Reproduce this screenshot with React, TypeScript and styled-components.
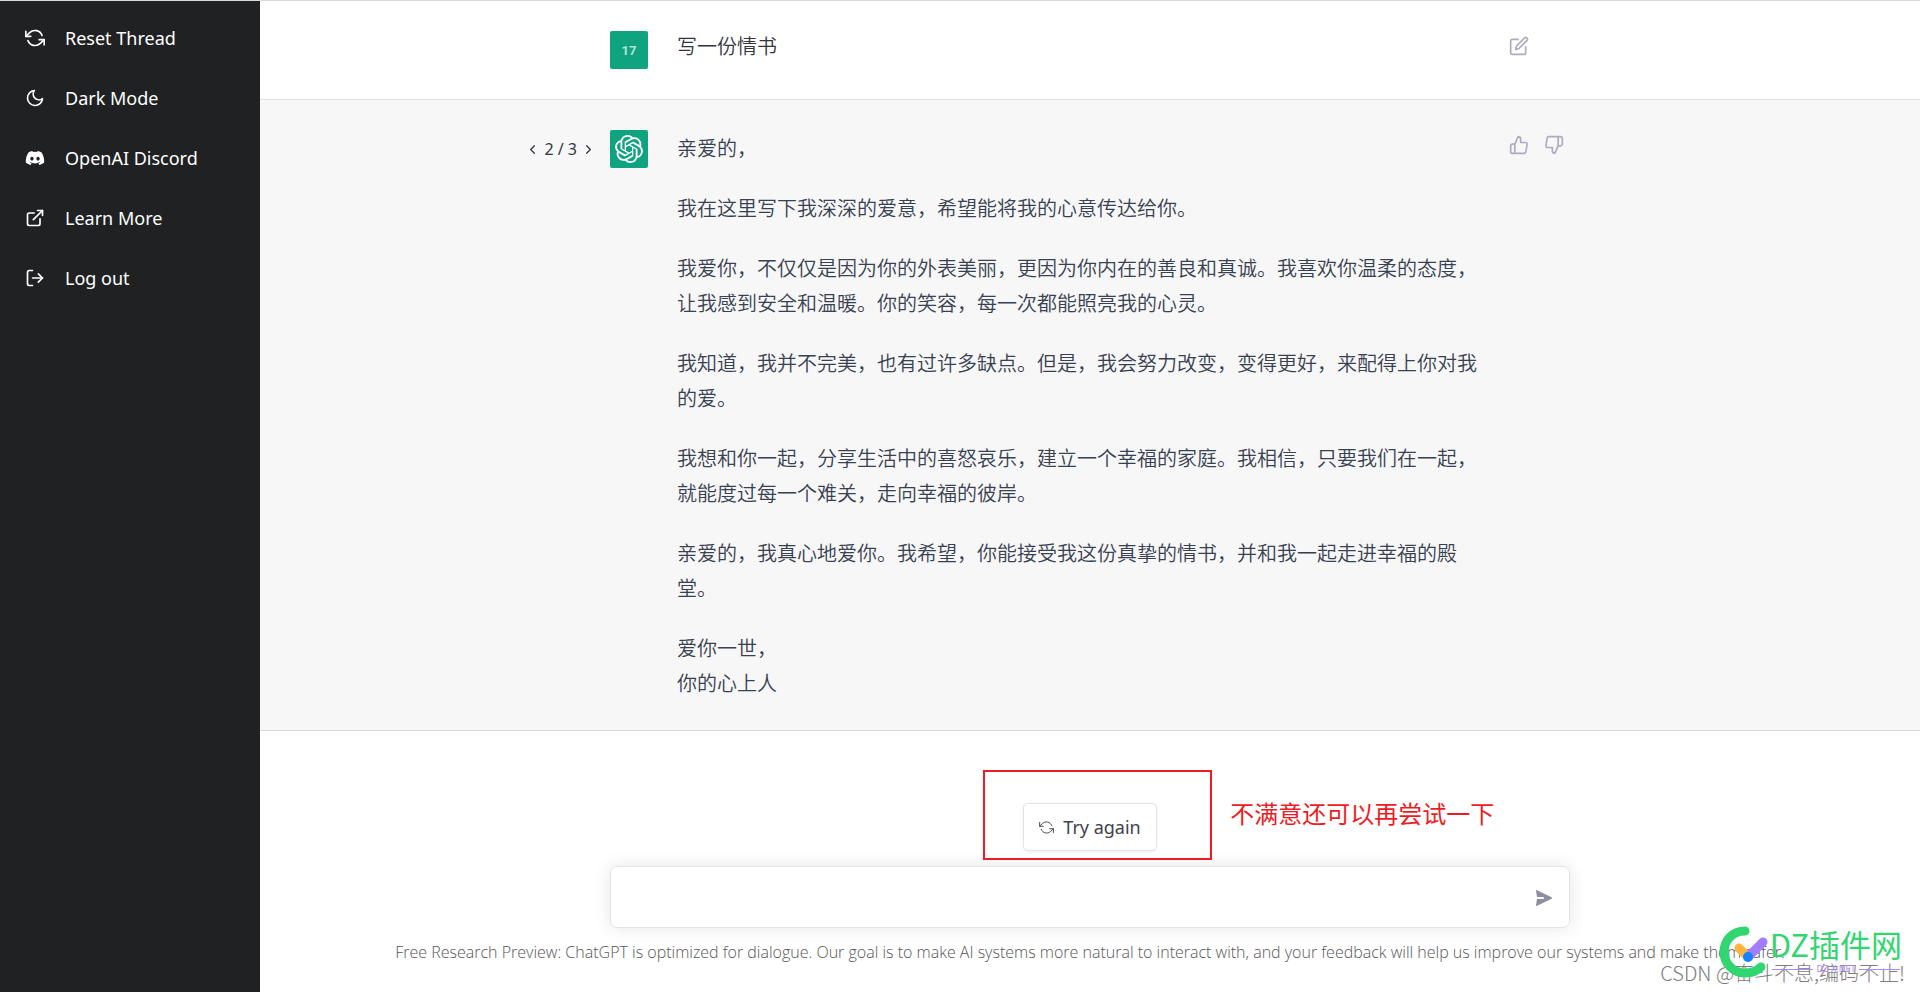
import React from "react";
import styled, { createGlobalStyle } from "styled-components";
import { FiRefreshCcw, FiMoon, FiExternalLink, FiLogOut, FiEdit, FiThumbsUp, FiThumbsDown, FiChevronLeft, FiChevronRight } from "react-icons/fi";
import { FaDiscord } from "react-icons/fa";
import { SiOpenai } from "react-icons/si";

const uiFont = '"Noto Sans", "Noto Sans CJK SC", sans-serif';
const cjkFont = '"Noto Sans CJK SC", "Noto Sans", sans-serif';

const GlobalStyle = createGlobalStyle`
  *, *::before, *::after { box-sizing: border-box; }
  body {
    margin: 0;
    background: #fff;
    color: #343541;
    font-family: ${uiFont};
    font-size: 18px;
  }
  button, input { font: inherit; color: inherit; }
  p { margin: 0; }
`;

const Page = styled.div`
  display: flex;
  min-height: 100vh;
  border-top: 1px solid #d9d9d9;
`;

const Sidebar = styled.nav`
  flex: 0 0 260px;
  display: flex;
  flex-direction: column;
  gap: 8px;
  padding: 11px 10px;
  background: #202123;
`;

const NavItem = styled.button`
  display: flex;
  align-items: center;
  gap: 20px;
  height: 52px;
  padding: 0 15px;
  border: 0;
  background: none;
  color: #fff;
  font-size: 18px;
  text-align: left;
  text-decoration: none;
  cursor: pointer;
  svg { flex: none; }
`;

const Main = styled.main`
  flex: 1;
  min-width: 0;
  display: flex;
  flex-direction: column;
`;

const Turn = styled.section<{ $answer?: boolean }>`
  display: flex;
  justify-content: center;
  padding: 30px 0;
  background: ${(p) => (p.$answer ? "#f7f7f8" : "#fff")};
  border-bottom: 1px solid ${(p) => (p.$answer ? "#d9d9dc" : "#e2e2e4")};
`;

const TurnBody = styled.div`
  position: relative;
  display: flex;
  align-items: flex-start;
  width: 960px;
  max-width: 100%;
`;

const Avatar = styled.div`
  flex: none;
  display: grid;
  place-items: center;
  width: 38px;
  height: 38px;
  border-radius: 2px;
  background: #10a37f;
  color: #fff;
`;

const UserInitials = styled.span`
  font: 700 13px/1 Roboto, sans-serif;
  color: #b5e2d7;
`;

const Pager = styled.div`
  position: absolute;
  right: 100%;
  top: 7px;
  display: flex;
  align-items: center;
  gap: 4px;
  margin-right: 14px;
  font-size: 16px;
  line-height: 24px;
  white-space: nowrap;
`;

const IconButton = styled.button`
  display: grid;
  place-items: center;
  padding: 0;
  border: 0;
  background: none;
  color: inherit;
  cursor: pointer;
`;

const Message = styled.div`
  flex: 1;
  display: flex;
  flex-direction: column;
  gap: 25px;
  margin-left: 29px;
  max-width: 803px;
  color: #374151;
  font-family: ${cjkFont};
  font-weight: 350;
  font-size: 20px;
  line-height: 35px;
`;

const Question = styled(Message)`
  line-height: 30px;
  color: #343541;
`;

const Actions = styled.div`
  display: flex;
  gap: 15px;
  width: 61px;
  margin-left: auto;
  padding-top: 5px;
  color: #acacbe;
`;

const Composer = styled.form`
  flex: 1;
  display: flex;
  flex-direction: column;
  align-items: center;
  padding-top: 72px;
`;

const RetryButton = styled.button`
  display: flex;
  align-items: center;
  gap: 9px;
  height: 48px;
  padding: 0 15px;
  border: 1px solid #e3e3e6;
  border-radius: 5px;
  background: #fff;
  box-shadow: 0 1px 3px rgba(0, 0, 0, 0.06);
  color: #40414f;
  font-size: 18px;
  cursor: pointer;
`;

const RetryArea = styled.div`
  position: relative;
`;

const Highlight = styled.div`
  position: absolute;
  left: -40px;
  top: -33px;
  width: 229px;
  height: 90px;
  border: 2px solid #ed1c24;
  pointer-events: none;
`;

const Note = styled.p`
  position: absolute;
  left: 207px;
  top: -8px;
  color: #ed1c24;
  font-family: ${cjkFont};
  font-size: 24px;
  line-height: 36px;
  white-space: nowrap;
`;

const InputBox = styled.div`
  display: flex;
  align-items: center;
  width: 960px;
  max-width: 100%;
  height: 62px;
  margin-top: 15px;
  padding: 2px 15px 0 20px;
  border: 1px solid #e3e3e6;
  border-radius: 7px;
  box-shadow: 0 0 18px rgba(0, 0, 0, 0.1);
  color: #8e8ea0;
`;

const Prompt = styled.input`
  flex: 1;
  height: 30px;
  border: 0;
  outline: 0;
  background: transparent;
`;

const Disclaimer = styled.p`
  margin-top: 13px;
  color: #565658;
  font-family: "Open Sans", sans-serif;
  font-size: 16px;
  font-weight: 300;
  line-height: 22px;
  white-space: nowrap;
`;

const Watermark = styled.div`
  position: absolute;
  right: 0;
  bottom: 0;
  width: 280px;
  height: 92px;
`;

const Author = styled.p`
  position: absolute;
  right: 15px;
  bottom: 5px;
  color: #7c7c7c;
  font-family: ${cjkFont};
  font-weight: 300;
  font-size: 20px;
  line-height: 28px;
  white-space: nowrap;
`;

const Brand = styled.p`
  position: absolute;
  right: 18px;
  bottom: 29px;
  color: #31d670;
  font-family: ${cjkFont};
  font-size: 31px;
  line-height: 38px;
  white-space: nowrap;
`;

const Mark = styled.svg`
  position: absolute;
  left: 78px;
  top: 24px;
`;

const Domain = styled.p`
  position: absolute;
  right: 20px;
  bottom: 17px;
  display: flex;
  align-items: center;
  gap: 3px;
  width: 128px;
  color: #a98bff;
  font-size: 9px;
  line-height: 12px;
  &::before, &::after {
    content: "";
    flex: 1;
    height: 1px;
    background: currentColor;
  }
`;

const answer: React.ReactNode[] = [
  "亲爱的，",
  "我在这里写下我深深的爱意，希望能将我的心意传达给你。",
  "我爱你，不仅仅是因为你的外表美丽，更因为你内在的善良和真诚。我喜欢你温柔的态度，让我感到安全和温暖。你的笑容，每一次都能照亮我的心灵。",
  "我知道，我并不完美，也有过许多缺点。但是，我会努力改变，变得更好，来配得上你对我的爱。",
  "我想和你一起，分享生活中的喜怒哀乐，建立一个幸福的家庭。我相信，只要我们在一起，就能度过每一个难关，走向幸福的彼岸。",
  "亲爱的，我真心地爱你。我希望，你能接受我这份真挚的情书，并和我一起走进幸福的殿堂。",
  <>爱你一世，<br />你的心上人</>,
];

export default function App() {
  return (
    <>
      <GlobalStyle />
      <Page>
        <Sidebar>
          <NavItem><FiRefreshCcw size={20} />Reset Thread</NavItem>
          <NavItem><FiMoon size={20} />Dark Mode</NavItem>
          <NavItem as="a" href="#discord"><FaDiscord size={20} />OpenAI Discord</NavItem>
          <NavItem as="a" href="#learn"><FiExternalLink size={20} />Learn More</NavItem>
          <NavItem><FiLogOut size={20} />Log out</NavItem>
        </Sidebar>
        <Main>
          <Turn>
            <TurnBody>
              <Avatar><UserInitials>17</UserInitials></Avatar>
              <Question><p>写一份情书</p></Question>
              <Actions>
                <IconButton aria-label="Edit"><FiEdit size={20} /></IconButton>
              </Actions>
            </TurnBody>
          </Turn>
          <Turn $answer>
            <TurnBody>
              <Pager>
                <IconButton aria-label="Previous"><FiChevronLeft size={15} /></IconButton>
                <span>2 / 3</span>
                <IconButton aria-label="Next"><FiChevronRight size={15} /></IconButton>
              </Pager>
              <Avatar><SiOpenai size={28} /></Avatar>
              <Message>
                {answer.map((text, i) => <p key={i}>{text}</p>)}
              </Message>
              <Actions>
                <IconButton aria-label="Good answer"><FiThumbsUp size={20} /></IconButton>
                <IconButton aria-label="Bad answer"><FiThumbsDown size={20} /></IconButton>
              </Actions>
            </TurnBody>
          </Turn>
          <Composer onSubmit={(e) => e.preventDefault()}>
            <RetryArea>
              <RetryButton type="button"><FiRefreshCcw size={15} strokeWidth={1.5} />Try again</RetryButton>
              <Highlight />
              <Note>不满意还可以再尝试一下</Note>
            </RetryArea>
            <InputBox>
              <Prompt aria-label="Message" />
              <IconButton type="submit" aria-label="Send">
                <svg width="20" height="20" viewBox="0 0 20 20" fill="currentColor">
                  <path d="M2.6 2 L17.6 9.3 Q18.6 10 17.6 10.7 L2.6 18 Q1.8 18.2 2 17.2 L3 11 H9.5 Q10.5 10 9.5 9 H3 L2 2.8 Q1.8 1.8 2.6 2Z" />
                </svg>
              </IconButton>
            </InputBox>
            <Disclaimer>Free Research Preview: ChatGPT is optimized for dialogue. Our goal is to make AI systems more natural to interact with, and your feedback will help us improve our systems and make them safer.</Disclaimer>
          </Composer>
        </Main>
      </Page>
      <Watermark>
        <Author>CSDN @奋斗不息,编码不止!</Author>
        <Domain>DZ-X.NET</Domain>
        <Mark width="54" height="56" viewBox="0 0 54 56" fill="none" strokeLinecap="round">
          <path d="M27 7C14 7 6 17 6 28s9 21 21 21c7 0 12-2 16-6" stroke="#31d670" strokeWidth="9" />
          <path d="M21 24l8 8" stroke="#ffb53d" strokeWidth="9" />
          <path d="M30 33l15-15" stroke="#a27dff" strokeWidth="9" />
          <circle cx="30" cy="33" r="5" fill="#1384ff" />
        </Mark>
        <Brand>DZ插件网</Brand>
      </Watermark>
    </>
  );
}
